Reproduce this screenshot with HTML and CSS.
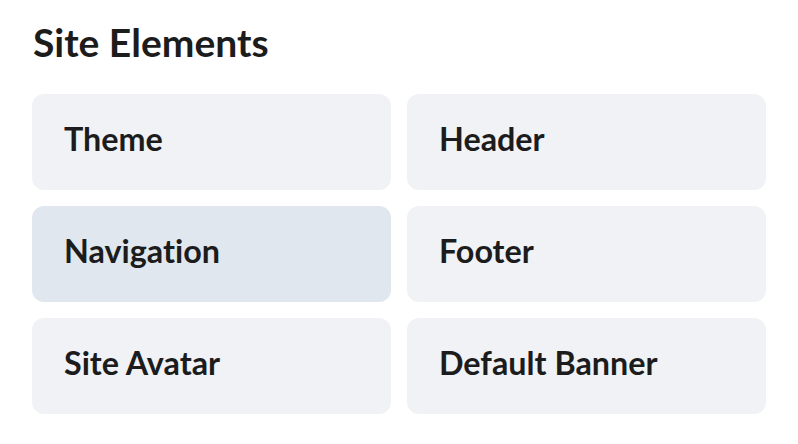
FILE: index.html
```html
<!DOCTYPE html>
<html>
<head>
<meta charset="utf-8">
<link rel="stylesheet" href="styles.css">
</head>
<body>
<div class="panel">
  <h2 class="title">Site Elements</h2>
  <div class="grid">
    <div class="card">Theme</div>
    <div class="card">Header</div>
    <div class="card active">Navigation</div>
    <div class="card">Footer</div>
    <div class="card">Site Avatar</div>
    <div class="card">Default Banner</div>
  </div>
</div>
</body>
</html>
```
FILE: styles.css
```css
html, body {
  margin: 0;
  padding: 0;
  background: #ffffff;
}
body {
  font-family: Lato, "Noto Sans", sans-serif;
  color: #1c1c1c;
  font-variant-ligatures: none;
}
.panel {
  padding: 19px 32px 0 32px;
}
.title {
  margin: 0 0 29px 0;
  font-size: 39px;
  font-weight: 700;
  line-height: 46px;
  padding-left: 1px;
  color: #1c1c1c;
}
.grid {
  display: grid;
  grid-template-columns: 1fr 1fr;
  gap: 16px;
}
.card {
  height: 96px;
  box-sizing: border-box;
  display: flex;
  align-items: center;
  padding: 0 30px 8px 32px;
  background: #f0f2f6;
  border-radius: 12px;
  font-size: 32.3px;
  font-weight: 700;
}
.card.active {
  background: #e0e7ee;
}
```
